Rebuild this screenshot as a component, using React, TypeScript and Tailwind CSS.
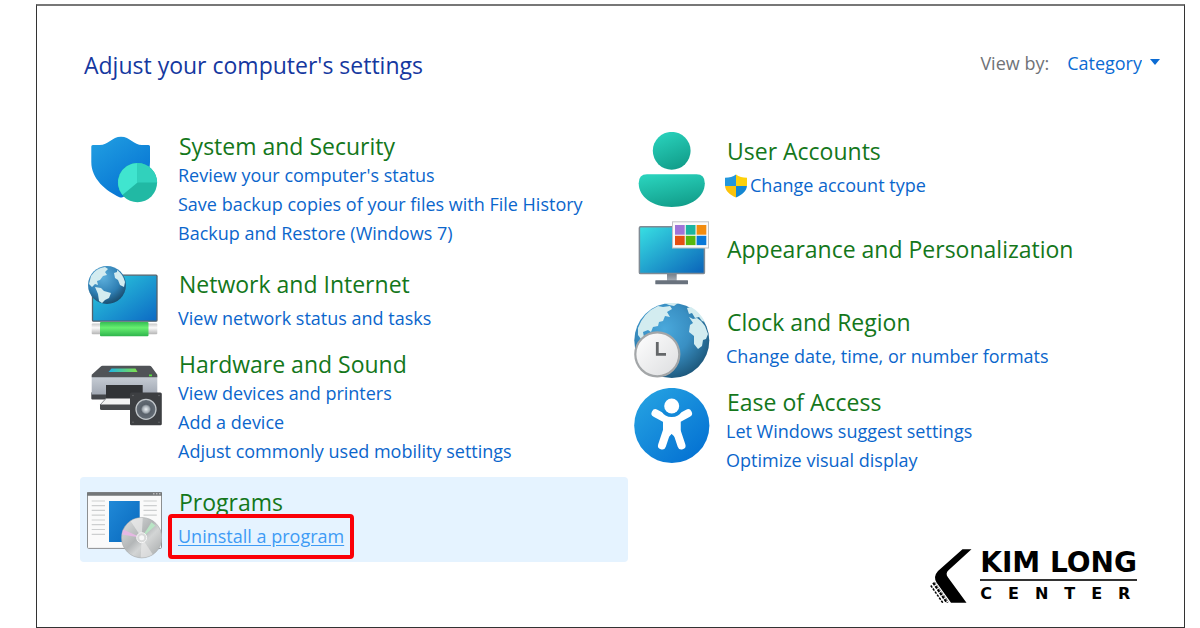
import type { ReactNode } from "react";

type Category = {
  title: string;
  icon: ReactNode;
  links: string[];
  shield?: boolean;
  active?: boolean;
};

const land = "#d3ecf0";

function Icon({ children }: { children: ReactNode }) {
  return (
    <svg viewBox="0 0 76 76" className="mt-1.5 size-[76px] shrink-0" aria-hidden="true">
      {children}
    </svg>
  );
}

function SecurityIcon() {
  return (
    <Icon>
      <defs>
        <linearGradient id="sec-a" x1="0" y1="0" x2="0.7" y2="1">
          <stop offset="0" stopColor="#22a0e2" />
          <stop offset="1" stopColor="#0572d2" />
        </linearGradient>
      </defs>
      <path
        d="M5.3 14.5q0-1.5 1.5-1.5h7C22 13 26 4.7 35 4.7S48 13 56 13h6.500q1.500 0 1.500 1.500V30C64 47 49 60 36.500 65.200q-1.500.6-3 0C20 59 5.300 47 5.300 30Z"
        fill="url(#sec-a)"
      />
      <circle cx="51.500" cy="50.600" r="19.600" fill="#21b9a4" />
      <path d="M51.500 50.600V31A19.600 19.600 0 0 0 36.400 63Z" fill="#40e5cf" />
      <path d="M51.500 50.600V31A19.600 19.600 0 0 1 71.100 50.600Z" fill="#31d1bc" />
    </Icon>
  );
}

function NetworkIcon() {
  return (
    <Icon>
      <defs>
        <linearGradient id="net-a" x1="0" y1="0" x2="1" y2="1">
          <stop offset="0" stopColor="#2ed0df" />
          <stop offset="1" stopColor="#0c69c4" />
        </linearGradient>
        <radialGradient id="net-b" cx="0.4" cy="0.3" r="0.75">
          <stop offset="0" stopColor="#5db0dc" />
          <stop offset="0.6" stopColor="#2f7fb4" />
          <stop offset="1" stopColor="#174766" />
        </radialGradient>
        <linearGradient id="net-c" x1="0" y1="0" x2="0" y2="1">
          <stop offset="0" stopColor="#35bd54" />
          <stop offset="0.4" stopColor="#67ef70" />
          <stop offset="1" stopColor="#2eb44c" />
        </linearGradient>
        <linearGradient id="net-d" x1="0" y1="0" x2="0" y2="1">
          <stop offset="0" stopColor="#c9c9c9" />
          <stop offset="0.4" stopColor="#fafafa" />
          <stop offset="1" stopColor="#b5b5b5" />
        </linearGradient>
      </defs>
      <rect x="6.500" y="10.200" width="64.500" height="46" rx="1" fill="url(#net-a)" stroke="#54616b" strokeWidth="1.300" />
      <rect x="5.700" y="58.500" width="65.600" height="10.700" rx="1" fill="url(#net-d)" />
      <rect x="14" y="57" width="48.500" height="14.300" rx="1" fill="url(#net-c)" />
      <circle cx="21" cy="20" r="19" fill="url(#net-b)" />
      <g fill={land}>
        <path d="M5 11Q10 3 19 2l3 2-3 3 2 3-4 1-3 4-3 1 1 4-3-1-3 3-3-3Z" />
        <path d="m9 22 6 1 3 3 7 2-2 5-4 2-3 3-3-2-1-7Z" />
        <path d="M31 5q6 4 8 12l-1 5-4-2-2-5-3-2-1-5 3-1Z" />
      </g>
    </Icon>
  );
}

function HardwareIcon() {
  return (
    <Icon>
      <defs>
        <linearGradient id="hw-a">
          <stop offset="0" stopColor="#1fb4e6" />
          <stop offset="1" stopColor="#7fe14b" />
        </linearGradient>
        <linearGradient id="hw-b" x1="0" y1="0" x2="0" y2="1">
          <stop offset="0" stopColor="#c8ced6" />
          <stop offset="1" stopColor="#a1a8b3" />
        </linearGradient>
        <radialGradient id="hw-c">
          <stop offset="0" stopColor="#edf1f5" />
          <stop offset="0.350" stopColor="#a1a9b0" />
          <stop offset="0.500" stopColor="#59616a" />
          <stop offset="1" stopColor="#656d76" />
        </radialGradient>
      </defs>
      <rect x="5.300" y="42" width="66" height="7.500" rx="1" fill="#44474b" />
      <path d="M5.700 26h65.600v18.500H5.700Z" fill="url(#hw-b)" />
      <path d="M16.500 15.700h47q1.200 0 2 1l5.800 8v2.500H5.700v-2.500l8.800-8q1-1 2-1Z" fill="#505357" />
      <path d="M25.500 18.500h24l2 3.500H22.500Z" fill="url(#hw-a)" />
      <rect x="63" y="24.500" width="3" height="1.800" fill="#56df3c" />
      <rect x="20" y="35" width="36.700" height="15" fill="#313336" />
      <path d="M20 48.500h29v6.500H14Z" fill="#f3f3f3" />
      <path d="m14 55 6-6.500" stroke="#8d9094" />
      <path d="M14 54.500h31v5.500H15.500q-1.500 0-1.500-1.500Z" fill="#47494c" />
      <rect x="44" y="42.400" width="31.800" height="32.800" rx="1.500" fill="#3d3f42" />
      <circle cx="60" cy="59.300" r="10" fill="url(#hw-c)" stroke="#c2c7cb" strokeWidth="1.300" />
      <g fill="#66696c">
        <circle cx="47" cy="45.500" r="0.800" />
        <circle cx="73" cy="45.500" r="0.800" />
        <circle cx="47" cy="72.300" r="0.800" />
        <circle cx="73" cy="72.300" r="0.800" />
      </g>
    </Icon>
  );
}

function ProgramsIcon() {
  return (
    <Icon>
      <defs>
        <linearGradient id="prg-a" x1="0" y1="0" x2="1" y2="1">
          <stop offset="0" stopColor="#2089d7" />
          <stop offset="1" stopColor="#0868bd" />
        </linearGradient>
        <linearGradient id="prg-b" x1="0" y1="0" x2="1" y2="1">
          <stop offset="0" stopColor="#e2e4e4" />
          <stop offset="0.450" stopColor="#b3b6b7" />
          <stop offset="0.600" stopColor="#d3d5d5" />
          <stop offset="1" stopColor="#a4a7a8" />
        </linearGradient>
      </defs>
      <rect x="1.500" y="9.600" width="74" height="55.800" rx="1" fill="#fafafa" stroke="#8c8f91" />
      <path d="M1 9.200h75v3.500H1Z" fill="#747779" />
      <path d="M67 10.800h1.500m1.500 0h1.500m1.500 0h1.500" stroke="#d5d5d5" />
      <path
        d="M5.700 18H19M5.700 22.700H19M5.700 27.400H19M5.700 32.200H19M5.700 37H19M5.700 41.700H19M5.700 46.500H19M5.700 51.300H19M57.500 18h13.300M57.500 22.700h13.300M57.500 27.400h13.300M57.500 32.200h13.300"
        stroke="#cdcfd0"
        strokeWidth="1.200"
      />
      <rect x="23" y="18" width="30.700" height="41" fill="url(#prg-a)" />
      <circle cx="55.700" cy="54.700" r="20.200" fill="url(#prg-b)" stroke="#a5a8a9" strokeWidth="0.600" />
      <path d="m55.700 54.700-11-16.500a20 20 0 0 1 12-3.300Z" fill="#ececec" opacity="0.700" />
      <path d="m55.700 54.700 11 16.500a20 20 0 0 1-12 3.300Z" fill="#ececec" opacity="0.600" />
      <path d="M55.700 54.700 37 46.500l-1 5Z" fill="#e5b8e3" />
      <path d="m55.700 54.700 9.800-15.500 4 3.200Z" fill="#b9e5c5" />
      <circle cx="55.700" cy="54.700" r="5" fill="#d9dada" stroke="#f6f6f6" />
      <circle cx="55.700" cy="54.700" r="2.500" fill="#f8f8f8" />
    </Icon>
  );
}

function UserIcon() {
  return (
    <Icon>
      <defs>
        <linearGradient id="usr-a" x1="0.300" y1="0" x2="0.700" y2="1">
          <stop offset="0" stopColor="#29d1bb" />
          <stop offset="1" stopColor="#119c89" />
        </linearGradient>
      </defs>
      <circle cx="37.700" cy="18.800" r="18.900" fill="url(#usr-a)" />
      <path d="M13 42.300h49.500q8.300 0 8.300 9C70.800 65 57 75 37.700 75S4.700 65 4.700 51.300q0-9 8.300-9Z" fill="url(#usr-a)" />
    </Icon>
  );
}

function AppearanceIcon() {
  return (
    <Icon>
      <defs>
        <linearGradient id="app-a" x1="0" y1="0" x2="1" y2="1">
          <stop offset="0" stopColor="#38e0e3" />
          <stop offset="1" stopColor="#0a62b9" />
        </linearGradient>
        <linearGradient id="app-b" x1="0" y1="0" x2="0" y2="1">
          <stop offset="0" stopColor="#77808b" />
          <stop offset="1" stopColor="#aab1b9" />
        </linearGradient>
      </defs>
      <rect x="33" y="57" width="9.700" height="7" fill="url(#app-b)" />
      <rect x="21.300" y="63.300" width="32.700" height="4" rx="0.500" fill="#69727d" />
      <rect x="5.400" y="9.800" width="65" height="46.800" rx="1.200" fill="url(#app-a)" stroke="#7f8a94" strokeWidth="1.500" />
      <rect x="38.500" y="4.800" width="36" height="26.200" fill="#fafafa" stroke="#bfc2c5" />
      <rect x="41" y="8" width="9.700" height="9.700" fill="#a074d8" />
      <rect x="51.800" y="8" width="9.700" height="9.700" fill="#1cb5a0" />
      <rect x="62.600" y="8" width="9.700" height="9.700" fill="#f28c0f" />
      <rect x="41" y="18.800" width="9.700" height="9.300" fill="#e55013" />
      <rect x="51.800" y="18.800" width="9.700" height="9.300" fill="#56b80e" />
      <rect x="62.600" y="18.800" width="9.700" height="9.300" fill="#0878d8" />
    </Icon>
  );
}

function ClockIcon() {
  return (
    <Icon>
      <defs>
        <radialGradient id="clk-a" cx="0.400" cy="0.350" r="0.700">
          <stop offset="0" stopColor="#4aa9dc" />
          <stop offset="0.500" stopColor="#398fc3" />
          <stop offset="1" stopColor="#1b5578" />
        </radialGradient>
        <linearGradient id="clk-b" x1="0" y1="0" x2="1" y2="1">
          <stop offset="0" stopColor="#ffffff" />
          <stop offset="1" stopColor="#dcdddf" />
        </linearGradient>
      </defs>
      <circle cx="37.800" cy="37.500" r="37.500" fill="url(#clk-a)" />
      <g fill={land}>
        <path d="M4 25Q10 9 24 3l5 1 7-1 2 3-5 3 3 5-5-1-2 5-4 1-1 4-5 1-2 5-3-2-5 2 1 5-3 2-3-4Z" />
        <path d="m30 0 8-1 6 1-4 3-5-1Z" />
        <path d="m53 5 4-1q9 5 14 15l-3-1-3-4-4 1-3-5-3 1Z" />
        <path d="m55 14 4 2 4-1 4 3 4 5 3 8-2 5-3 1-1 6-4 3-4-5v-8l-5-4 1-7 3-2Z" />
      </g>
      <circle cx="23.300" cy="51.300" r="22" fill="url(#clk-b)" stroke="#a3a6a8" strokeWidth="2.200" />
      <path d="M23.300 39v12.300H32" fill="none" stroke="#646769" strokeWidth="2.800" />
    </Icon>
  );
}

function EaseIcon() {
  return (
    <Icon>
      <defs>
        <linearGradient id="eas-a" x1="0.150" y1="0.100" x2="0.850" y2="0.900">
          <stop offset="0" stopColor="#239fe1" />
          <stop offset="1" stopColor="#0573d3" />
        </linearGradient>
      </defs>
      <circle cx="37.800" cy="37.500" r="37.600" fill="url(#eas-a)" />
      <path
        d="M21.500 25.300 33 31.500v11l-5 15M54 25.300l-11.500 6.200v11l5 15"
        fill="none"
        stroke="#fff"
        strokeWidth="8"
        strokeLinecap="round"
        strokeLinejoin="round"
      />
      <path d="M29 28h17.500v15.500L42 50l-4.300-4-4.200 4-4.500-6.500Z" fill="#fff" />
      <path d="M27.500 23q3 6 10.200 6T48 23Z" fill="#1389d9" />
      <circle cx="37.700" cy="18" r="7.500" fill="#fff" />
      <path d="m37.700 46-2.500 6.500h5Z" fill="#1080d6" />
    </Icon>
  );
}

function ShieldBadge() {
  return (
    <svg viewBox="0 0 24 24" className="-ml-0.5 mr-0.5 size-6 shrink-0" aria-hidden="true">
      <defs>
        <clipPath id="uac">
          <path d="M12 .5c3 2.300 6.500 3 11 3.200V11c0 6-5 10-11 12.500C6 21 1 17 1 11V3.700C5.500 3.500 9 2.800 12 .5Z" />
        </clipPath>
      </defs>
      <g clipPath="url(#uac)">
        <path d="M0 0h12v12H0Z" fill="#2497dc" />
        <path d="M12 0h12v12H12Z" fill="#fed10a" />
        <path d="M0 12h12v12H0Z" fill="#fcc30b" />
        <path d="M12 12h12v12H12Z" fill="#1487d2" />
      </g>
    </svg>
  );
}

const left: Category[] = [
  {
    title: "System and Security",
    icon: <SecurityIcon />,
    links: [
      "Review your computer's status",
      "Save backup copies of your files with File History",
      "Backup and Restore (Windows 7)",
    ],
  },
  { title: "Network and Internet", icon: <NetworkIcon />, links: ["View network status and tasks"] },
  {
    title: "Hardware and Sound",
    icon: <HardwareIcon />,
    links: ["View devices and printers", "Add a device", "Adjust commonly used mobility settings"],
  },
  { title: "Programs", icon: <ProgramsIcon />, links: ["Uninstall a program"], active: true },
];

const right: Category[] = [
  { title: "User Accounts", icon: <UserIcon />, links: ["Change account type"], shield: true },
  { title: "Appearance and Personalization", icon: <AppearanceIcon />, links: [] },
  { title: "Clock and Region", icon: <ClockIcon />, links: ["Change date, time, or number formats"] },
  {
    title: "Ease of Access",
    icon: <EaseIcon />,
    links: ["Let Windows suggest settings", "Optimize visual display"],
  },
];

// fewer links means the block is centred against its icon
const spacing = ["pt-[23px] pb-[33px]", "gap-[5px] pt-2.5 pb-[11px]", "pt-[5px] pb-[11px]"];

function CategoryItem({ item }: { item: Category }) {
  return (
    <li className={item.active ? "flex gap-4 rounded-sm bg-[#e5f3ff] pl-1.5" : "flex gap-4 pl-1.5"}>
      {item.icon}
      <div className={`flex flex-col items-start ${spacing[Math.min(item.links.length, 2)]}`}>
        <h2 className="pl-px text-[23px] leading-[30px] whitespace-nowrap text-[#14771b]">
          <a href="#">{item.title}</a>
        </h2>
        <ul>
          {item.links.map((link) => (
            <li key={link} className="relative flex items-center text-lg leading-[29px] whitespace-nowrap">
              {item.shield ? <ShieldBadge /> : null}
              <a href="#" className={item.active ? "text-[#3e9bf5] underline underline-offset-2" : "text-[#0b66cc]"}>
                {link}
              </a>
              {item.active ? (
                <span className="pointer-events-none absolute -inset-x-2.5 -inset-y-2 rounded-sm border-4 border-[#fb0007]" />
              ) : null}
            </li>
          ))}
        </ul>
      </div>
    </li>
  );
}

function Logo() {
  return (
    <div className="mt-[63px] mr-[39px] flex gap-2 self-end text-black">
      <svg viewBox="0 0 42 54" className="h-[54px] w-[42px]" aria-hidden="true">
        <path d="M32.500.300h9L18.500 21.200q-3.300 3.200-.8 6.800L36.500 53.800H21L6.500 33.500Q3 27.500 8 22Z" />
        <path d="M3.500 33.500 17.500 53.800" stroke="#000" strokeWidth="3" strokeDasharray="3 1" fill="none" />
        <path d="m.8 36.500 12 17.300" stroke="#000" strokeWidth="1.500" strokeDasharray="2.500 1.200" fill="none" />
        <path d="m4 32.500 14.500 21.300" stroke="#fff" strokeWidth="0.600" fill="none" />
      </svg>
      <div className="flex flex-col font-['DejaVu_Sans',sans-serif] font-bold">
        <span className="text-[28px] leading-7">KIM LONG</span>
        <span className="mt-0.5 h-0.5 bg-[#333]" />
        <span className="mt-1 -mr-4 text-base leading-[18px] tracking-[16px]">CENTER</span>
      </div>
    </div>
  );
}

export default function App() {
  return (
    <div className="bg-white pt-1 font-['Open_Sans','Noto_Sans',sans-serif]">
      <main className="mr-[15px] ml-9 border border-t-2 border-[#333] border-t-[#777] pt-[43px] pr-2 pb-6 pl-[43px]">
        <header className="mb-[45px] flex items-start justify-between pr-4 pl-1">
          <h1 className="text-[23px] leading-8 text-[#15389f]">Adjust your computer's settings</h1>
          <div className="flex items-center text-lg leading-7">
            <label htmlFor="view-by" className="mr-[18px] text-[#707378]">
              View by:
            </label>
            <div className="relative">
              <select id="view-by" className="block appearance-none [field-sizing:content] bg-transparent pr-[18px] text-[#0b6bd3]">
                <option>Category</option>
                <option>Large icons</option>
                <option>Small icons</option>
              </select>
              <svg viewBox="0 0 10 6" className="pointer-events-none absolute top-2.5 right-0 h-1.5 w-2.5" aria-hidden="true">
                <path d="M0 0h10L5 6Z" fill="#0b6bd3" />
              </svg>
            </div>
          </div>
        </header>
        <div className="grid grid-cols-2">
          <ul>
            {left.map((item) => (
              <CategoryItem key={item.title} item={item} />
            ))}
          </ul>
          <div className="flex flex-col">
            <ul>
              {right.map((item) => (
                <CategoryItem key={item.title} item={item} />
              ))}
            </ul>
            <Logo />
          </div>
        </div>
      </main>
    </div>
  );
}
